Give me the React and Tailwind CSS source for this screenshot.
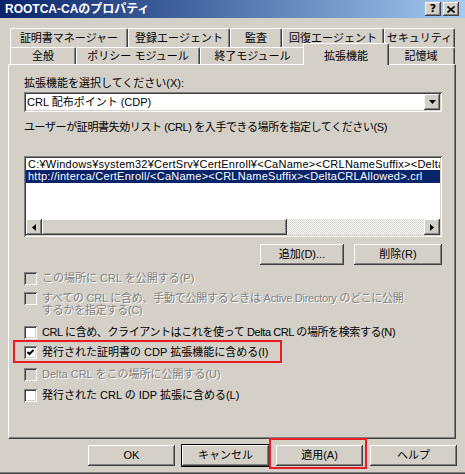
import React from 'react';

const raised =
  'bg-[#d4d0c8] shadow-[inset_-1px_-1px_0_#404040,inset_1px_1px_0_#ffffff,inset_-2px_-2px_0_#808080,inset_2px_2px_0_#d4d0c8]';
const sunken =
  'shadow-[inset_1px_1px_0_#808080,inset_-1px_-1px_0_#ffffff,inset_2px_2px_0_#404040,inset_-2px_-2px_0_#d4d0c8]';

function Tab({ label, w, selected }) {
  if (selected) {
    return (
      <div
        className={`${w} relative z-10 -mx-[2px] -mt-[4px] -mb-[1px] h-[22px] flex justify-center pt-[4px] bg-[#d4d0c8] border-l border-t border-white border-r border-r-[#404040] rounded-t-[2px] shadow-[inset_-1px_0_0_#808080]`}
      >
        {label}
      </div>
    );
  }
  return (
    <div
      className={`${w} h-full flex items-center justify-center pt-[1px] whitespace-nowrap bg-[#d4d0c8] border-l border-t border-white border-r border-r-[#404040] rounded-t-[2px] shadow-[inset_-1px_0_0_#808080]`}
    >
      {label}
    </div>
  );
}

function CheckBox({ checked, disabled }) {
  return (
    <span
      className={`${sunken} shrink-0 w-[13px] h-[13px] flex items-center justify-center ${
        disabled ? 'bg-[#d4d0c8]' : 'bg-white'
      }`}
    >
      {checked && (
        <svg width="13" height="13" viewBox="0 0 13 13">
          <path d="M3.5 6 L5.5 8 L9.5 4" fill="none" stroke="#000" strokeWidth="2" />
        </svg>
      )}
    </span>
  );
}

function Check({ children, checked, disabled, className = '', textClass = '' }) {
  return (
    <div className={`flex items-start gap-[5px] ${className}`}>
      <CheckBox checked={checked} disabled={disabled} />
      <span
        className={`whitespace-nowrap leading-[13px] ${textClass} ${
          disabled ? 'text-[#808080] [text-shadow:1px_1px_0_#ffffff]' : 'text-black'
        }`}
      >
        {children}
      </span>
    </div>
  );
}

function Button({ children, w, focused }) {
  return (
    <div
      className={`${w} h-[21px] ${raised} flex items-center justify-center ${
        focused ? 'outline outline-1 outline-black' : ''
      }`}
    >
      {children}
    </div>
  );
}

function Arrow({ dir }) {
  const d = {
    down: 'M0 0 L7 0 L3.5 4 Z',
    left: 'M4 0 L4 7 L0 3.5 Z',
    right: 'M0 0 L4 3.5 L0 7 Z',
  }[dir];
  const size = dir === 'down' ? [7, 4] : [4, 7];
  return (
    <svg width={size[0]} height={size[1]} viewBox={`0 0 ${size[0]} ${size[1]}`}>
      <path d={d} fill="#000" />
    </svg>
  );
}

export default function App() {
  return (
    <div className="w-[465px] h-[474px] bg-[#d4d0c8] text-[11px] text-black [font-family:'Liberation_Sans','Noto_Sans_CJK_JP',sans-serif] flex flex-col shadow-[inset_0_-1px_0_#404040,inset_0_-2px_0_#808080] overflow-hidden">
      {/* title bar */}
      <div className="h-[18px] flex items-center justify-between pl-[5px] pr-[6px] bg-gradient-to-r from-[#0a246a] to-[#a6caf0]">
        <span className="text-white font-bold text-[12px] leading-[14px]">ROOTCA-CAのプロパティ</span>
        <div className="flex gap-[2px]">
          <div className={`w-[16px] h-[14px] ${raised} flex items-center justify-center`}>
            <span className="font-bold text-[11px] leading-[11px] pb-[1px] [font-family:'DejaVu_Sans',sans-serif]">?</span>
          </div>
          <div className={`w-[16px] h-[14px] ${raised} flex items-center justify-center`}>
            <svg width="8" height="7" viewBox="0 0 8 7">
              <path d="M0.5 0.5 L7.5 6.5 M7.5 0.5 L0.5 6.5" stroke="#000" strokeWidth="1.6" />
            </svg>
          </div>
        </div>
      </div>

      {/* tabs */}
      <div className="mt-[10px] ml-[10px] flex h-[19px]">
        <Tab label="証明書マネージャー" w="w-[118px]" />
        <Tab label="登録エージェント" w="w-[102px]" />
        <Tab label="監査" w="w-[52px]" />
        <Tab label="回復エージェント" w="w-[102px]" />
        <Tab label="セキュリティ" w="w-[71px]" />
      </div>
      <div className="ml-[10px] flex h-[17px] items-start">
        <Tab label="全般" w="w-[66px]" />
        <Tab label="ポリシー モジュール" w="w-[124px]" />
        <Tab label="終了モジュール" w="w-[105px]" />
        <Tab label="拡張機能" w="w-[86px]" selected />
        <Tab label="記憶域" w="w-[68px]" />
      </div>

      {/* panel */}
      <div className="ml-[8px] w-[448px] h-[375px] border-l border-t border-white border-r border-b border-r-[#404040] border-b-[#404040] shadow-[inset_-1px_-1px_0_#808080] pl-[15px] pr-[13px] flex flex-col">
        <div className="mt-[12px] leading-[13px]">拡張機能を選択してください(X):</div>
        <div className={`mt-[2px] h-[20px] bg-white ${sunken} flex items-center justify-between pl-[3px] pr-[2px]`}>
          <span className="leading-[13px]">CRL 配布ポイント (CDP)</span>
          <div className={`w-[16px] h-[16px] ${raised} flex items-center justify-center`}>
            <Arrow dir="down" />
          </div>
        </div>
        <div className="mt-[9px] leading-[13px] tracking-[-0.4px] whitespace-nowrap">
          ユーザーが証明書失効リスト (CRL) を入手できる場所を指定してください(S)
        </div>

        {/* list box */}
        <div className={`mt-[22px] h-[81px] bg-white ${sunken} p-[2px] flex flex-col`}>
          <div className="h-[61px] overflow-hidden tracking-[0.25px]">
            <div className="h-[12px] leading-[12px] pl-[2px] whitespace-nowrap">
              C:¥Windows¥system32¥CertSrv¥CertEnroll¥&lt;CaName&gt;&lt;CRLNameSuffix&gt;&lt;DeltaCRLAllowed&gt;.crl
            </div>
            <div className="h-[13px] leading-[13px] pl-[2px] whitespace-nowrap bg-[#0a246a] text-white">
              http://interca/CertEnroll/&lt;CaName&gt;&lt;CRLNameSuffix&gt;&lt;DeltaCRLAllowed&gt;.crl
            </div>
          </div>
          <div className="h-[16px] flex">
            <div className={`w-[16px] h-[16px] ${raised} flex items-center justify-center`}>
              <Arrow dir="left" />
            </div>
            <div className={`w-[245px] h-[16px] ${raised}`} />
            <div className="flex-1 h-[16px] bg-[repeating-conic-gradient(#ffffff_0_25%,#d4d0c8_0_50%)] bg-[length:2px_2px]" />
            <div className={`w-[16px] h-[16px] ${raised} flex items-center justify-center`}>
              <Arrow dir="right" />
            </div>
          </div>
        </div>

        <div className="mt-[7px] flex justify-end gap-[10px]">
          <Button w="w-[84px]">追加(D)...</Button>
          <Button w="w-[88px]">削除(R)</Button>
        </div>

        <Check disabled className="mt-[7px]">この場所に CRL を公開する(P)</Check>
        <div className="mt-[7px] flex items-start gap-[5px]">
          <CheckBox disabled />
          <span className="whitespace-nowrap leading-[12px] tracking-[-0.25px] text-[#808080] [text-shadow:1px_1px_0_#ffffff]">
            すべての CRL に含め、手動で公開するときは Active Directory のどこに公開
            <br />
            するかを指定する(C)
          </span>
        </div>
        <Check className="mt-[10px]" textClass="tracking-[-0.4px]">
          CRL に含め、クライアントはこれを使って Delta CRL の場所を検索する(N)
        </Check>
        <div className="relative mt-[7px]">
          <Check checked>発行された証明書の CDP 拡張機能に含める(I)</Check>
          <span className="absolute left-[-11px] top-[-6px] w-[269px] h-[23px] border-2 border-[#e81c24]" />
        </div>
        <Check disabled className="mt-[9px]">Delta CRL をこの場所に公開する(U)</Check>
        <Check className="mt-[8px]">発行された CRL の IDP 拡張に含める(L)</Check>
      </div>

      {/* dialog buttons */}
      <div className="mt-[6px] flex justify-end gap-[7px] pr-[8px]">
        <Button w="w-[87px]">OK</Button>
        <Button w="w-[87px]" focused>キャンセル</Button>
        <div className="relative">
          <Button w="w-[87px]">適用(A)</Button>
          <span className="absolute left-[-7px] top-[-7px] w-[98px] h-[31px] border-2 border-[#e81c24]" />
        </div>
        <Button w="w-[87px]">ヘルプ</Button>
      </div>
    </div>
  );
}
